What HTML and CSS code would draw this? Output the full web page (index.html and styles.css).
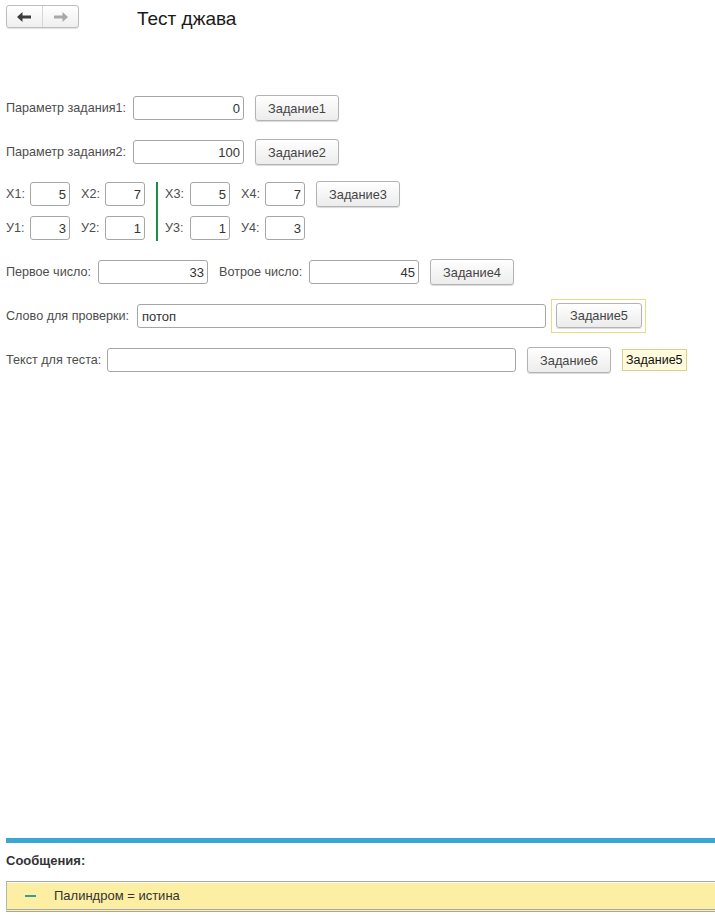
FILE: index.html
```html
<!DOCTYPE html>
<html lang="ru">
<head>
<meta charset="utf-8">
<title>Тест джава</title>
<link rel="stylesheet" href="styles.css">
</head>
<body>
<div class="page">
  <header class="header">
    <div class="nav">
      <button class="nav-btn nav-back" type="button" aria-label="Назад">
        <svg width="14" height="10" viewBox="0 0 14 10"><path d="M0 5 L5.5 0 L5.5 3.5 L14 3.5 L14 6.5 L5.5 6.5 L5.5 10 Z" fill="#3c3c3c"/></svg>
      </button>
      <button class="nav-btn nav-fwd" type="button" aria-label="Вперёд">
        <svg width="14" height="10" viewBox="0 0 14 10"><path d="M14 5 L8.5 0 L8.5 3.5 L0 3.5 L0 6.5 L8.5 6.5 L8.5 10 Z" fill="#a8a8a8"/></svg>
      </button>
    </div>
    <h1 class="title">Тест джава</h1>
  </header>

  <main class="form">
    <div class="row">
      <span class="lbl w127">Параметр задания1:</span>
      <input class="field num w111" value="0">
      <button class="btn" type="button">Задание1</button>
    </div>
    <div class="row">
      <span class="lbl w127">Параметр задания2:</span>
      <input class="field num w111" value="100">
      <button class="btn" type="button">Задание2</button>
    </div>

    <div class="xy">
      <div class="pts">
        <div class="pt"><span class="lbl w24">X1:</span><input class="field num w40" value="5"></div>
        <div class="pt"><span class="lbl w24">X2:</span><input class="field num w40" value="7"></div>
        <div class="pt"><span class="lbl w24">У1:</span><input class="field num w40" value="3"></div>
        <div class="pt"><span class="lbl w24">У2:</span><input class="field num w40" value="1"></div>
      </div>
      <div class="vline"></div>
      <div class="pts">
        <div class="pt"><span class="lbl w25">X3:</span><input class="field num w40" value="5"></div>
        <div class="pt"><span class="lbl w24">X4:</span><input class="field num w40" value="7"></div>
        <div class="pt"><span class="lbl w25">У3:</span><input class="field num w40" value="1"></div>
        <div class="pt"><span class="lbl w24">У4:</span><input class="field num w40" value="3"></div>
      </div>
      <button class="btn btn-xy" type="button">Задание3</button>
    </div>

    <div class="row">
      <span class="lbl w92">Первое число:</span>
      <input class="field num w110" value="33">
      <span class="lbl w90">Вотрое число:</span>
      <input class="field num w110" value="45">
      <button class="btn" type="button">Задание4</button>
    </div>
    <div class="row">
      <span class="lbl w131">Слово для проверки:</span>
      <input class="field txt w409" value="потоп">
      <div class="focus"><button class="btn btn-focus" type="button">Задание5</button></div>
    </div>
    <div class="row">
      <span class="lbl w101">Текст для теста:</span>
      <input class="field txt w409" value="">
      <button class="btn" type="button">Задание6</button>
      <span class="tip">Задание5</span>
    </div>
  </main>

  <section class="messages">
    <div class="msg-bar"></div>
    <div class="msg-title">Сообщения:</div>
    <div class="msg-box">
      <span class="msg-dash"></span>
      <span class="msg-text">Палиндром = истина</span>
    </div>
  </section>
</div>
</body>
</html>
```
FILE: styles.css
```css
* { box-sizing: border-box; }
html, body { margin: 0; padding: 0; }
body {
  font-family: "Liberation Sans", Arial, sans-serif;
  font-size: 12.6px;
  color: #4a4a4a;
  background: #fff;
  overflow: hidden;
}
.page {
  height: 915px;
  display: flex;
  flex-direction: column;
  padding-left: 6px;
}
.header {
  display: flex;
  align-items: flex-start;
  padding-top: 5px;
  height: 86px;
}
.nav {
  display: flex;
  width: 73px;
  height: 23px;
  border: 1px solid #bdbdbd;
  border-radius: 3px;
  background: linear-gradient(#ffffff, #efefef);
  box-shadow: 0 1px 1px rgba(0,0,0,0.12);
}
.nav-btn {
  border: 0;
  background: transparent;
  padding: 0;
  margin: 0;
  display: flex;
  align-items: center;
  justify-content: center;
  height: 21px;
}
.nav-back { width: 36px; border-right: 1px solid #d6d6d6; padding-right: 2px; }
.nav-fwd { width: 35px; }
.title {
  margin: 2px 0 0 58px;
  font-size: 19px;
  font-weight: normal;
  color: #1a1a1a;
  line-height: 23px;
}
.form { display: flex; flex-direction: column; }
.row {
  display: flex;
  align-items: center;
  height: 44px;
}
.lbl { flex: none; white-space: nowrap; color: #4d4d4d; }
.w24 { width: 24px; }
.w25 { width: 25px; }
.w90 { width: 90px; }
.w92 { width: 92px; }
.w101 { width: 101px; }
.w127 { width: 127px; }
.w131 { width: 131px; }
.w40 { width: 40px; }
.w110 { width: 110px; }
.w111 { width: 111px; }
.w409 { width: 409px; }
.field {
  flex: none;
  height: 24px;
  border: 1px solid #a6a6a6;
  border-radius: 3px;
  background: #fff;
  font-family: inherit;
  font-size: 13px;
  color: #333;
  padding: 0 3px;
  margin: 0 11px 0 0;
  outline: none;
}
.num { text-align: right; }
.txt { text-align: left; padding-left: 4px; }
.btn {
  flex: none;
  width: 84px;
  height: 26px;
  border: 1px solid #b3b3b3;
  border-radius: 3px;
  background: linear-gradient(#ffffff, #ececec);
  box-shadow: 0 1px 1px rgba(0,0,0,0.15);
  font-family: inherit;
  font-size: 12.8px;
  color: #444;
  padding: 0;
  margin: 0 11px 0 0;
}
.xy {
  display: flex;
  align-items: flex-start;
  height: 76px;
  padding-top: 8px;
}
.pts {
  display: grid;
  grid-template-columns: auto auto;
  row-gap: 10px;
}
.pt { display: flex; align-items: center; height: 24px; }
.pt .field { margin-right: 11px; }
.vline {
  width: 2px;
  height: 59px;
  background: #1f8a4c;
  margin-right: 7px;
}
.btn-xy { margin-top: -1px; }
.focus {
  flex: none;
  display: flex;
  align-items: flex-start;
  border: 1px solid #e8dc82;
  padding: 3px 3px 3px 4px;
  margin-left: -6px;
  height: 34px;
}
.btn-focus { width: 86px; height: 25px; margin: 0; }
.tip {
  flex: none;
  height: 22px;
  line-height: 20px;
  border: 1px solid #dccf8a;
  background: #fffbdc;
  color: #111;
  font-size: 12.5px;
  padding: 0 3px;
}
.messages {
  margin-top: auto;
  padding-bottom: 3px;
}
.msg-bar {
  height: 5px;
  background: #39a6d6;
}
.msg-title {
  font-weight: bold;
  font-size: 13px;
  color: #333;
  height: 38px;
  line-height: 36px;
}
.msg-box {
  height: 31px;
  border-top: 1px solid #a8a8a8;
  border-left: 1px solid #b5b5b5;
  border-bottom: 3px double #a8a8a8;
  background: #fcefa3;
  display: flex;
  align-items: center;
  box-shadow: inset 0 1px 0 #fff;
}
.msg-dash {
  width: 11px;
  height: 2px;
  background: #3a9a9c;
  margin: 0 18px 0 18px;
}
.msg-text { color: #333; font-size: 13px; }
```
